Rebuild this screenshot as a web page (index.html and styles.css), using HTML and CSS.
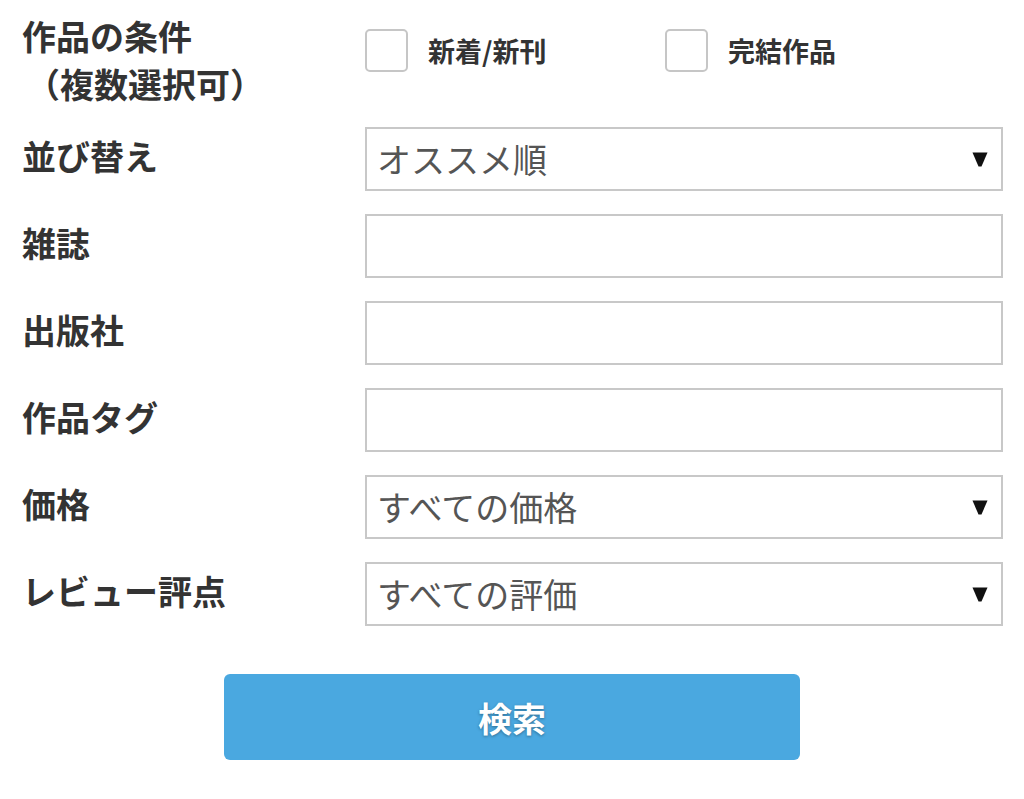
FILE: index.html
```html
<!DOCTYPE html>
<html lang="ja">
<head>
<meta charset="utf-8">
<link rel="stylesheet" href="styles.css">
</head>
<body>
<form class="search">
  <div class="row row-cond">
    <div class="label">作品の条件<br><span class="sub">（複数選択可）</span></div>
    <div class="checks">
      <label class="check"><span class="box"></span><span class="ctext">新着/新刊</span></label>
      <label class="check"><span class="box"></span><span class="ctext">完結作品</span></label>
    </div>
  </div>
  <div class="row">
    <div class="label">並び替え</div>
    <div class="field select"><span class="val">オススメ順</span><svg class="arrow" width="16" height="15" viewBox="0 0 16 15"><path d="M0.5 0.5H15.5L9.5 14.5H6.5Z" fill="#111"/></svg></div>
  </div>
  <div class="row">
    <div class="label">雑誌</div>
    <div class="field"></div>
  </div>
  <div class="row">
    <div class="label">出版社</div>
    <div class="field"></div>
  </div>
  <div class="row">
    <div class="label">作品タグ</div>
    <div class="field"></div>
  </div>
  <div class="row">
    <div class="label">価格</div>
    <div class="field select"><span class="val">すべての価格</span><svg class="arrow" width="16" height="15" viewBox="0 0 16 15"><path d="M0.5 0.5H15.5L9.5 14.5H6.5Z" fill="#111"/></svg></div>
  </div>
  <div class="row">
    <div class="label">レビュー評点</div>
    <div class="field select"><span class="val">すべての評価</span><svg class="arrow" width="16" height="15" viewBox="0 0 16 15"><path d="M0.5 0.5H15.5L9.5 14.5H6.5Z" fill="#111"/></svg></div>
  </div>
  <div class="actions">
    <button type="button" class="btn">検索</button>
  </div>
</form>
</body>
</html>
```

FILE: styles.css
```css
html, body {
  margin: 0;
  padding: 0;
  background: #fff;
}
body {
  font-family: "Noto Sans CJK JP", "Noto Sans", sans-serif;
  color: #333;
}
.search {
  padding: 12px 21px 0 22px;
  display: flex;
  flex-direction: column;
  gap: 23px;
}
.row {
  display: grid;
  grid-template-columns: 343px 1fr;
  align-items: center;
}
.row .label {
  padding-bottom: 6px;
}
.row-cond {
  align-items: start;
  margin-bottom: -4px;
}
.row-cond .label {
  padding-bottom: 0;
}
.label {
  font-size: 34px;
  font-weight: bold;
  line-height: 48px;
  color: #333;
}
.row-cond .label .sub {
  display: inline-block;
  margin-left: 4px;
}
.checks {
  display: flex;
  padding-top: 17px;
}
.check {
  display: flex;
  align-items: center;
  width: 300px;
}
.box {
  width: 43px;
  height: 43px;
  border: 2px solid #c6c6c6;
  border-radius: 5px;
  background: #fff;
  box-sizing: border-box;
  flex: none;
}
.ctext {
  margin-left: 20px;
  font-size: 27px;
  font-weight: bold;
  color: #333;
}
.field {
  height: 64px;
  border: 2px solid #c8c8c8;
  box-sizing: border-box;
  background: #fff;
  display: flex;
  align-items: center;
  padding: 0 13px 0 10px;
}
.select .val {
  flex: 1;
  font-size: 34px;
  color: #555;
  padding-bottom: 2px;
}
.select .arrow {
  flex: none;
}
.actions {
  display: flex;
  justify-content: center;
  padding-top: 25px;
  margin-left: -22px;
  margin-right: -21px;
}
.btn {
  width: 576px;
  height: 86px;
  border: none;
  border-radius: 6px;
  background: #4aa8e0;
  color: #fff;
  font-family: "Noto Sans CJK JP", sans-serif;
  font-size: 34px;
  font-weight: bold;
  text-shadow: 0 1px 3px rgba(0,0,0,0.35);
}
```
